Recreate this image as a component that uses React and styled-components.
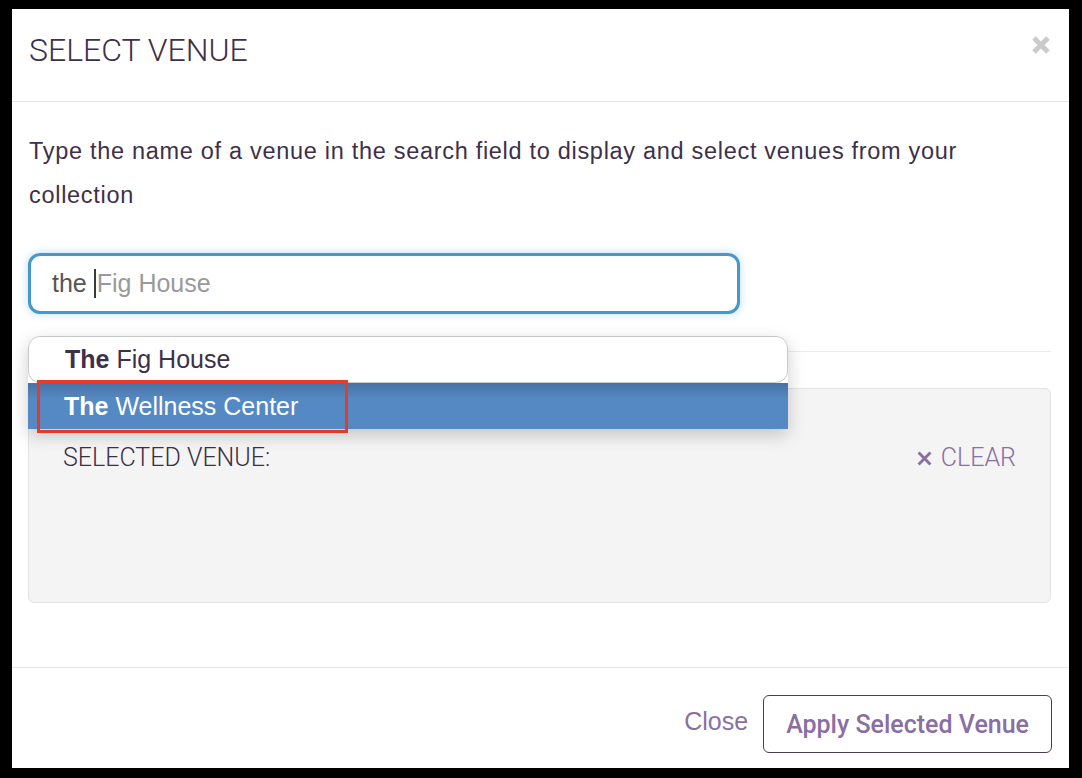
import React from "react";
import styled, { createGlobalStyle } from "styled-components";

const GlobalStyle = createGlobalStyle`
  html, body {
    margin: 0;
    padding: 0;
    background: #000;
  }
  * { box-sizing: border-box; }
`;

const INK = "#3e3049";
const PURPLE = "#8a6fa3";
const RULE = "#e5e5e5";

const Backdrop = styled.div`
  width: 1082px;
  height: 778px;
  padding: 9px 13px 10px 12px;
  background: #000;
  display: flex;
  overflow: hidden;
`;

const Modal = styled.div`
  width: 1057px;
  height: 759px;
  background: #fff;
  display: flex;
  flex-direction: column;
`;

const Header = styled.div`
  height: 93px;
  flex: none;
  display: flex;
  justify-content: space-between;
  align-items: flex-start;
  padding: 25px 18px 0 17px;
  border-bottom: 1px solid ${RULE};
`;

const Title = styled.h2`
  margin: 0;
  font-family: Roboto, "Liberation Sans", sans-serif;
  font-weight: 300;
  font-size: 32px;
  line-height: 33px;
  color: ${INK};
`;

const CloseX = styled.button`
  margin-top: 1px;
  padding: 0;
  border: 0;
  background: none;
  width: 20px;
  height: 20px;
  display: flex;
  cursor: pointer;
`;

const Body = styled.div`
  flex: 1;
  padding: 27px 18px 64px 16px;
  display: flex;
  flex-direction: column;
`;

const Intro = styled.p`
  margin: 0 0 0 1px;
  font-family: "Liberation Sans", Arial, sans-serif;
  font-size: 23.5px;
  letter-spacing: 0.7px;
  line-height: 44px;
  color: ${INK};
`;

const SearchBox = styled.div`
  position: relative;
  margin-top: 36px;
  width: 712px;
`;

const SearchField = styled.div`
  height: 61px;
  border: 3px solid #4597cc;
  border-radius: 12px;
  box-shadow: 0 0 9px rgba(102, 175, 233, 0.45);
  display: flex;
  align-items: center;
  padding-left: 21px;
  font-family: "Liberation Sans", Arial, sans-serif;
  font-size: 25px;
  background: #fff;
`;

const Typed = styled.span`
  color: #555;
  white-space: pre;
`;

const Caret = styled.span`
  display: inline-block;
  width: 0;
  height: 29px;
  border-left: 2px solid #3a3a3a;
  margin-right: 1px;
`;

const Hint = styled.span`
  color: #9a9a9a;
`;

const Suggestions = styled.ul`
  position: absolute;
  top: calc(100% + 22px);
  left: 0;
  width: 760px;
  margin: 0;
  padding: 0;
  list-style: none;
  box-shadow: 0 6px 18px rgba(0, 0, 0, 0.2);
  border-radius: 12px 12px 0 0;
  z-index: 5;
`;

const Suggestion = styled.li`
  height: ${(p) => (p.$active ? "46px" : "47px")};
  display: flex;
  align-items: center;
  padding-left: 36px;
  font-family: "Liberation Sans", Arial, sans-serif;
  font-size: 25px;
  color: ${(p) => (p.$active ? "#fff" : INK)};
  background: ${(p) =>
    p.$active
      ? "linear-gradient(to bottom, #4772a5 0px, #5589c3 16px, #5589c3 100%)"
      : "#fff"};
  border: ${(p) => (p.$active ? "none" : "1px solid #c9c9c9")};
  border-radius: ${(p) => (p.$active ? "0" : "12px")};

  b {
    font-weight: 700;
  }
`;

const Highlight = styled.div`
  position: absolute;
  left: 9px;
  top: 44px;
  width: 311px;
  height: 53px;
  border: 3px solid #e63c25;
  pointer-events: none;
`;

const Divider = styled.hr`
  margin: 37px 0 0 0;
  border: 0;
  border-top: 1px solid #ececec;
  height: 0;
`;

const SelectedPanel = styled.div`
  margin-top: 36px;
  height: 215px;
  background: #f4f4f4;
  border: 1px solid #e3e3e3;
  border-radius: 6px;
  padding: 54px 34px 0 34px;
`;

const PanelRow = styled.div`
  display: flex;
  justify-content: space-between;
  align-items: center;
  font-family: Roboto, "Liberation Sans", sans-serif;
  font-weight: 300;
  font-size: 25px;
  line-height: 30px;
`;

const PanelLabel = styled.span`
  color: #3a2f44;
`;

const ClearLink = styled.button`
  border: 0;
  background: none;
  padding: 0;
  font: inherit;
  color: ${PURPLE};
  display: flex;
  align-items: center;
  gap: 8px;
  cursor: pointer;
`;

const Footer = styled.div`
  height: 101px;
  flex: none;
  border-top: 1px solid ${RULE};
  display: flex;
  justify-content: flex-end;
  align-items: flex-start;
  gap: 15px;
  padding: 27px 17px 0 0;
`;

const TextButton = styled.button`
  border: 0;
  background: none;
  padding: 0;
  height: 58px;
  font-family: "Liberation Sans", Arial, sans-serif;
  font-size: 25px;
  color: ${PURPLE};
  cursor: pointer;
  display: flex;
  align-items: center;
  margin-top: -3px;
`;

const OutlineButton = styled.button`
  height: 58px;
  padding: 0 22px;
  border: 1.5px solid #4b3b59;
  border-radius: 6px;
  background: #fff;
  font-family: Roboto, "Liberation Sans", sans-serif;
  font-weight: 500;
  font-size: 25px;
  color: ${PURPLE};
  cursor: pointer;
`;

const CrossIcon = ({ size, stroke, color }) => (
  <svg width={size} height={size} viewBox="0 0 20 20" aria-hidden="true">
    <path
      d="M3 3 L17 17 M17 3 L3 17"
      stroke={color}
      strokeWidth={stroke}
      strokeLinecap="butt"
      fill="none"
    />
  </svg>
);

export default function App() {
  return (
    <>
      <GlobalStyle />
      <Backdrop>
        <Modal role="dialog" aria-label="Select venue">
          <Header>
            <Title>SELECT VENUE</Title>
            <CloseX aria-label="Close">
              <CrossIcon size={20} stroke={5} color="#cbcbcb" />
            </CloseX>
          </Header>

          <Body>
            <Intro>
              Type the name of a venue in the search field to display and select
              venues from your collection
            </Intro>

            <SearchBox>
              <SearchField>
                <Typed>the </Typed>
                <Caret />
                <Hint>Fig House</Hint>
              </SearchField>
              <Suggestions>
                <Suggestion>
                  <b>The</b>&nbsp;Fig House
                </Suggestion>
                <Suggestion $active>
                  <b>The</b>&nbsp;Wellness Center
                </Suggestion>
                <Highlight />
              </Suggestions>
            </SearchBox>

            <Divider />

            <SelectedPanel>
              <PanelRow>
                <PanelLabel>SELECTED VENUE:</PanelLabel>
                <ClearLink>
                  <CrossIcon size={17} stroke={3.4} color={PURPLE} />
                  CLEAR
                </ClearLink>
              </PanelRow>
            </SelectedPanel>
          </Body>

          <Footer>
            <TextButton>Close</TextButton>
            <OutlineButton>Apply Selected Venue</OutlineButton>
          </Footer>
        </Modal>
      </Backdrop>
    </>
  );
}
